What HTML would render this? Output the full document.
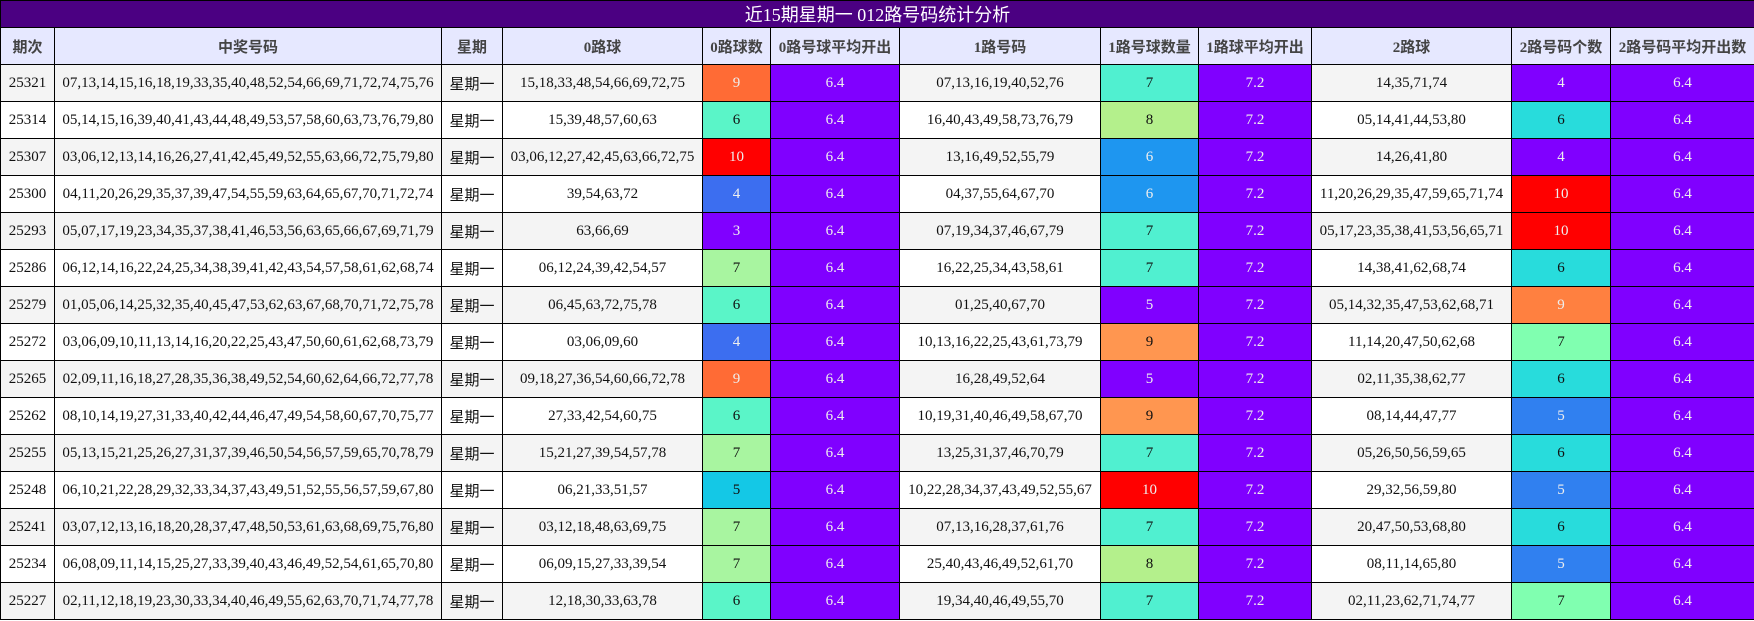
<!DOCTYPE html><html><head><meta charset="utf-8"><style>
body{margin:0;background:#fff;}
table{border-collapse:collapse;table-layout:fixed;width:1754px;font-family:"Liberation Serif","Noto Serif CJK SC",serif;font-size:15px;}
td,th{border:1px solid #000;text-align:center;padding:0;overflow:hidden;white-space:nowrap;}
.t{background:#4b0082;color:#fff;height:26px;font-size:18px;font-family:"Liberation Serif","Noto Sans CJK SC",serif;}
th{background:#e6e8ff;color:#444;height:36px;font-weight:bold;font-size:15px;font-family:"Liberation Serif","Noto Sans CJK SC",sans-serif;}
tr.r td{height:36px;color:#111;}
tr.r:nth-child(even) td{background:#fff;}
tr.r:nth-child(odd) td{background:#f4f4f4;}
td.w{font-family:"Liberation Sans","Noto Sans CJK SC",sans-serif;}
tr.r td.p{background:#8000ff;color:#eee;}
tr.r td.o{background:#ff6b35;color:#eee;}
tr.r td.o2{background:#ff9650;color:#111;}
tr.r td.o3{background:#ff8040;color:#eee;}
tr.r td.rd{background:#ff0000;color:#eee;}
tr.r td.t1{background:#50f0d0;}
tr.r td.t2{background:#5af5c8;}
tr.r td.g{background:#a8f5a0;}
tr.r td.g2{background:#b4f08c;}
tr.r td.m{background:#80ffb0;}
tr.r td.c{background:#28dcdc;}
tr.r td.c2{background:#14c8e6;}
tr.r td.b{background:#3c6ef0;color:#eee;}
tr.r td.b2{background:#1e96f0;color:#eee;}
tr.r td.b3{background:#3080f0;color:#eee;}
</style></head><body>
<table>
<colgroup><col style="width:54px"><col style="width:387px"><col style="width:61px"><col style="width:200px"><col style="width:68px"><col style="width:129px"><col style="width:201px"><col style="width:98px"><col style="width:113px"><col style="width:200px"><col style="width:99px"><col style="width:144px"></colgroup>
<tr><td class="t" colspan="12">近15期星期一 012路号码统计分析</td></tr>
<tr><th>期次</th><th>中奖号码</th><th>星期</th><th>0路球</th><th>0路球数</th><th>0路号球平均开出</th><th>1路号码</th><th>1路号球数量</th><th>1路球平均开出</th><th>2路球</th><th>2路号码个数</th><th>2路号码平均开出数</th></tr>
<tr class="r"><td>25321</td><td>07,13,14,15,16,18,19,33,35,40,48,52,54,66,69,71,72,74,75,76</td><td class="w">星期一</td><td>15,18,33,48,54,66,69,72,75</td><td class="o">9</td><td class="p">6.4</td><td>07,13,16,19,40,52,76</td><td class="t1">7</td><td class="p">7.2</td><td>14,35,71,74</td><td class="p">4</td><td class="p">6.4</td></tr>
<tr class="r"><td>25314</td><td>05,14,15,16,39,40,41,43,44,48,49,53,57,58,60,63,73,76,79,80</td><td class="w">星期一</td><td>15,39,48,57,60,63</td><td class="t2">6</td><td class="p">6.4</td><td>16,40,43,49,58,73,76,79</td><td class="g2">8</td><td class="p">7.2</td><td>05,14,41,44,53,80</td><td class="c">6</td><td class="p">6.4</td></tr>
<tr class="r"><td>25307</td><td>03,06,12,13,14,16,26,27,41,42,45,49,52,55,63,66,72,75,79,80</td><td class="w">星期一</td><td>03,06,12,27,42,45,63,66,72,75</td><td class="rd">10</td><td class="p">6.4</td><td>13,16,49,52,55,79</td><td class="b2">6</td><td class="p">7.2</td><td>14,26,41,80</td><td class="p">4</td><td class="p">6.4</td></tr>
<tr class="r"><td>25300</td><td>04,11,20,26,29,35,37,39,47,54,55,59,63,64,65,67,70,71,72,74</td><td class="w">星期一</td><td>39,54,63,72</td><td class="b">4</td><td class="p">6.4</td><td>04,37,55,64,67,70</td><td class="b2">6</td><td class="p">7.2</td><td>11,20,26,29,35,47,59,65,71,74</td><td class="rd">10</td><td class="p">6.4</td></tr>
<tr class="r"><td>25293</td><td>05,07,17,19,23,34,35,37,38,41,46,53,56,63,65,66,67,69,71,79</td><td class="w">星期一</td><td>63,66,69</td><td class="p">3</td><td class="p">6.4</td><td>07,19,34,37,46,67,79</td><td class="t1">7</td><td class="p">7.2</td><td>05,17,23,35,38,41,53,56,65,71</td><td class="rd">10</td><td class="p">6.4</td></tr>
<tr class="r"><td>25286</td><td>06,12,14,16,22,24,25,34,38,39,41,42,43,54,57,58,61,62,68,74</td><td class="w">星期一</td><td>06,12,24,39,42,54,57</td><td class="g">7</td><td class="p">6.4</td><td>16,22,25,34,43,58,61</td><td class="t1">7</td><td class="p">7.2</td><td>14,38,41,62,68,74</td><td class="c">6</td><td class="p">6.4</td></tr>
<tr class="r"><td>25279</td><td>01,05,06,14,25,32,35,40,45,47,53,62,63,67,68,70,71,72,75,78</td><td class="w">星期一</td><td>06,45,63,72,75,78</td><td class="t2">6</td><td class="p">6.4</td><td>01,25,40,67,70</td><td class="p">5</td><td class="p">7.2</td><td>05,14,32,35,47,53,62,68,71</td><td class="o3">9</td><td class="p">6.4</td></tr>
<tr class="r"><td>25272</td><td>03,06,09,10,11,13,14,16,20,22,25,43,47,50,60,61,62,68,73,79</td><td class="w">星期一</td><td>03,06,09,60</td><td class="b">4</td><td class="p">6.4</td><td>10,13,16,22,25,43,61,73,79</td><td class="o2">9</td><td class="p">7.2</td><td>11,14,20,47,50,62,68</td><td class="m">7</td><td class="p">6.4</td></tr>
<tr class="r"><td>25265</td><td>02,09,11,16,18,27,28,35,36,38,49,52,54,60,62,64,66,72,77,78</td><td class="w">星期一</td><td>09,18,27,36,54,60,66,72,78</td><td class="o">9</td><td class="p">6.4</td><td>16,28,49,52,64</td><td class="p">5</td><td class="p">7.2</td><td>02,11,35,38,62,77</td><td class="c">6</td><td class="p">6.4</td></tr>
<tr class="r"><td>25262</td><td>08,10,14,19,27,31,33,40,42,44,46,47,49,54,58,60,67,70,75,77</td><td class="w">星期一</td><td>27,33,42,54,60,75</td><td class="t2">6</td><td class="p">6.4</td><td>10,19,31,40,46,49,58,67,70</td><td class="o2">9</td><td class="p">7.2</td><td>08,14,44,47,77</td><td class="b3">5</td><td class="p">6.4</td></tr>
<tr class="r"><td>25255</td><td>05,13,15,21,25,26,27,31,37,39,46,50,54,56,57,59,65,70,78,79</td><td class="w">星期一</td><td>15,21,27,39,54,57,78</td><td class="g">7</td><td class="p">6.4</td><td>13,25,31,37,46,70,79</td><td class="t1">7</td><td class="p">7.2</td><td>05,26,50,56,59,65</td><td class="c">6</td><td class="p">6.4</td></tr>
<tr class="r"><td>25248</td><td>06,10,21,22,28,29,32,33,34,37,43,49,51,52,55,56,57,59,67,80</td><td class="w">星期一</td><td>06,21,33,51,57</td><td class="c2">5</td><td class="p">6.4</td><td>10,22,28,34,37,43,49,52,55,67</td><td class="rd">10</td><td class="p">7.2</td><td>29,32,56,59,80</td><td class="b3">5</td><td class="p">6.4</td></tr>
<tr class="r"><td>25241</td><td>03,07,12,13,16,18,20,28,37,47,48,50,53,61,63,68,69,75,76,80</td><td class="w">星期一</td><td>03,12,18,48,63,69,75</td><td class="g">7</td><td class="p">6.4</td><td>07,13,16,28,37,61,76</td><td class="t1">7</td><td class="p">7.2</td><td>20,47,50,53,68,80</td><td class="c">6</td><td class="p">6.4</td></tr>
<tr class="r"><td>25234</td><td>06,08,09,11,14,15,25,27,33,39,40,43,46,49,52,54,61,65,70,80</td><td class="w">星期一</td><td>06,09,15,27,33,39,54</td><td class="g">7</td><td class="p">6.4</td><td>25,40,43,46,49,52,61,70</td><td class="g2">8</td><td class="p">7.2</td><td>08,11,14,65,80</td><td class="b3">5</td><td class="p">6.4</td></tr>
<tr class="r"><td>25227</td><td>02,11,12,18,19,23,30,33,34,40,46,49,55,62,63,70,71,74,77,78</td><td class="w">星期一</td><td>12,18,30,33,63,78</td><td class="t2">6</td><td class="p">6.4</td><td>19,34,40,46,49,55,70</td><td class="t1">7</td><td class="p">7.2</td><td>02,11,23,62,71,74,77</td><td class="m">7</td><td class="p">6.4</td></tr>
</table>
</body></html>
